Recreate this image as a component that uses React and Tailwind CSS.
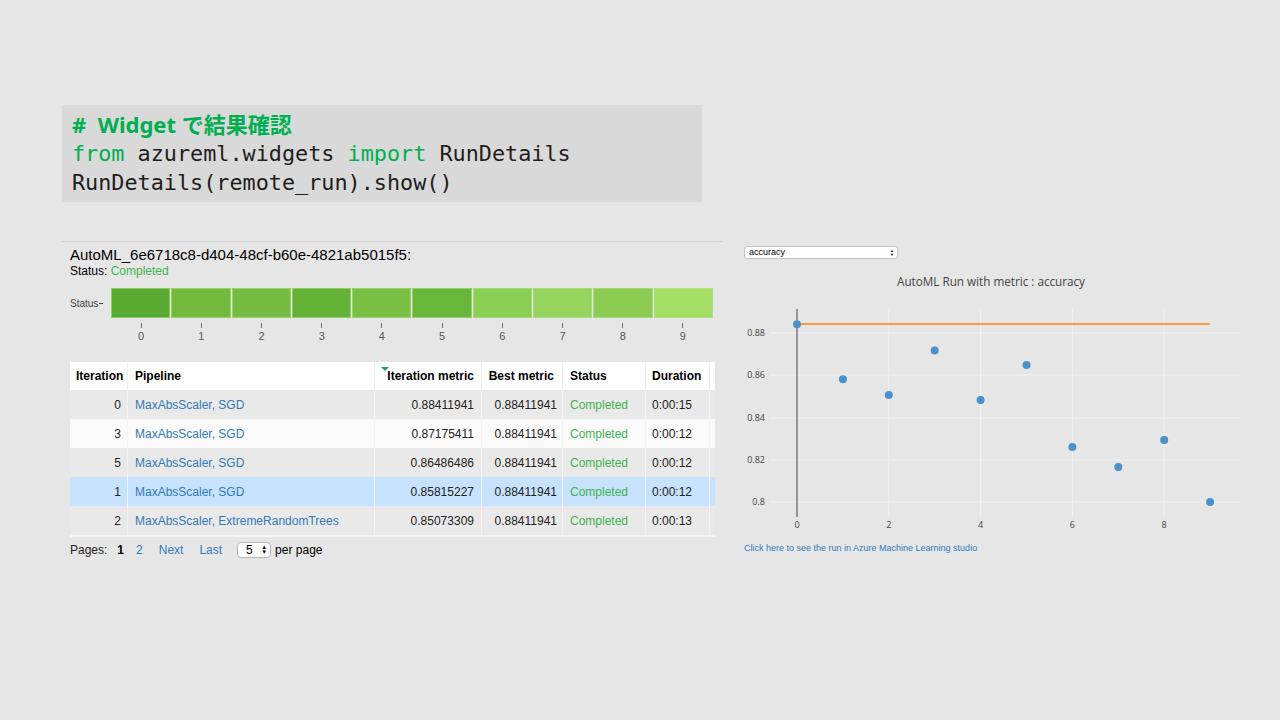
import React from 'react';

const cells = ['#58aa30', '#72ba3e', '#75bd42', '#63b236', '#78bf44', '#68b63a', '#8ccf55', '#97d45d', '#8ccc52', '#a6df66'];

const rows = [
  { it: 0, pipe: 'MaxAbsScaler, SGD', metric: '0.88411941', dur: '0:00:15', bg: 'bg-[#e9e9e9]' },
  { it: 3, pipe: 'MaxAbsScaler, SGD', metric: '0.87175411', dur: '0:00:12', bg: 'bg-[#fafafa]' },
  { it: 5, pipe: 'MaxAbsScaler, SGD', metric: '0.86486486', dur: '0:00:12', bg: 'bg-[#e9e9e9]' },
  { it: 1, pipe: 'MaxAbsScaler, SGD', metric: '0.85815227', dur: '0:00:12', bg: 'bg-[#c6e2fc]' },
  { it: 2, pipe: 'MaxAbsScaler, ExtremeRandomTrees', metric: '0.85073309', dur: '0:00:13', bg: 'bg-[#e9e9e9]' },
];

// accuracy per iteration
const points = [0.88411941, 0.85815227, 0.85073309, 0.87175411, 0.8483, 0.86486486, 0.8261, 0.8166, 0.8294, 0.8001];
const px = (i) => 53 + i * 45.9;
const py = (v) => 43 + ((0.88 - v) / 0.02) * 42.3;

function Chart() {
  const yTicks = [
    { label: '0.88', y: 43 },
    { label: '0.86', y: 85 },
    { label: '0.84', y: 128 },
    { label: '0.82', y: 170 },
    { label: '0.8', y: 212 },
  ];
  const xTicks = [0, 2, 4, 6, 8];
  return (
    <svg width="500" height="245" className="block">
      {yTicks.map((t) => (
        <line key={t.label} x1="26" x2="496" y1={t.y} y2={t.y} stroke="#f2f2f2" strokeWidth="1" />
      ))}
      {xTicks.slice(1).map((t) => (
        <line key={t} x1={px(t)} x2={px(t)} y1="19" y2="227" stroke="#f2f2f2" strokeWidth="1" />
      ))}
      <line x1="53" x2="53" y1="19" y2="227" stroke="#444" strokeWidth="1" />
      {yTicks.map((t) => (
        <text key={t.label} x="21" y={t.y + 3} textAnchor="end" fontSize="9" fill="#444" fontFamily="Open Sans, sans-serif">
          {t.label}
        </text>
      ))}
      {xTicks.map((t) => (
        <text key={t} x={px(t)} y="238" textAnchor="middle" fontSize="9" fill="#444" fontFamily="Open Sans, sans-serif">
          {t}
        </text>
      ))}
      <line x1="53" x2="466" y1="34" y2="34" stroke="#ff7f0e" strokeWidth="1.5" />
      {points.map((v, i) => (
        <circle key={i} cx={px(i)} cy={py(v)} r="4" fill="#4b91c9" />
      ))}
    </svg>
  );
}

export default function App() {
  return (
    <div className="w-[1280px] h-[720px] bg-[#e6e6e6] pt-[105px] pl-[62px] overflow-hidden">
      {/* code cell */}
      <div className="w-[640px] h-[97px] bg-[#d9d9d9] pl-[10px] pt-[5px] leading-[29px]">
        <div className="font-['Noto_Sans','Noto_Sans_CJK_JP',sans-serif] font-bold text-[22px] text-[#00b050]">
          #&nbsp;&nbsp;Widget で結果確認
        </div>
        <div className="font-['DejaVu_Sans_Mono',monospace] text-[21.8px] text-[#1e1e1e]">
          <span className="text-[#00b050]">from</span> azureml.widgets <span className="text-[#00b050]">import</span> RunDetails
        </div>
        <div className="font-['DejaVu_Sans_Mono',monospace] text-[21.8px] text-[#1e1e1e]">
          RunDetails(remote_run).show()
        </div>
      </div>

      {/* widget output */}
      <div className="flex mt-[39px] font-['Liberation_Sans',Arial,sans-serif]">
        <div className="w-[661px] border-t border-[#d2d2d2] pl-[8px]">
          <div className="pt-[4px] text-[15px] leading-[18px] text-black">AutoML_6e6718c8-d404-48cf-b60e-4821ab5015f5:</div>
          <div className="text-[12px] leading-[15px] text-black">
            Status: <span className="text-[#3fb34f]">Completed</span>
          </div>

          <div className="flex items-center mt-[9px] h-[30px]">
            <div className="w-[41px] flex items-center text-[10px] text-[#444]">
              Status<span className="ml-[1px] w-[4px] h-px bg-[#444]"></span>
            </div>
            <div className="flex-1 flex gap-[1px] h-[30px] mr-[10px]">
              {cells.map((c, i) => (
                <div key={i} className="flex-1 border border-[#b3df88]/60" style={{ backgroundColor: c }}></div>
              ))}
            </div>
          </div>
          <div className="flex ml-[41px] mr-[10px] mt-[5px]">
            {cells.map((c, i) => (
              <div key={i} className="flex-1 flex flex-col items-center">
                <div className="w-px h-[5px] bg-[#777]"></div>
                <div className="text-[11px] leading-[14px] mt-[1px] text-[#555]">{i}</div>
              </div>
            ))}
          </div>

          {/* runs table */}
          <div className="mt-[19px] w-[645px] text-[12px] text-[#222] border-b-2 border-[#f4f4f4]">
            <div className="flex h-[28px] bg-white font-bold text-black items-stretch">
              <div className="w-[58px] pl-[6px] flex items-center border-r border-[#efefef]">Iteration</div>
              <div className="w-[247px] pl-[7px] flex items-center border-r border-[#efefef]">Pipeline</div>
              <div className="w-[107px] pr-[7px] flex items-center justify-end border-r border-[#efefef] relative">
                <span className="absolute left-[6px] top-[5px] w-0 h-0 border-l-[4px] border-r-[4px] border-t-[4px] border-l-transparent border-r-transparent border-t-[#1a9e6a]"></span>
                Iteration metric
              </div>
              <div className="w-[81px] pr-[8px] flex items-center justify-end border-r border-[#efefef]">Best metric</div>
              <div className="w-[83px] pl-[7px] flex items-center border-r border-[#efefef]">Status</div>
              <div className="w-[64px] pl-[6px] flex items-center border-r border-[#efefef]">Duration</div>
              <div className="w-[5px]"></div>
            </div>
            {rows.map((r) => (
              <div key={r.it} className={`flex h-[29px] items-stretch ${r.bg}`}>
                <div className="w-[58px] pr-[6px] flex items-center justify-end border-r border-[#f3f3f3]">{r.it}</div>
                <div className="w-[247px] pl-[7px] flex items-center text-[#337ab7] border-r border-[#f3f3f3]">{r.pipe}</div>
                <div className="w-[107px] pr-[7px] flex items-center justify-end border-r border-[#f3f3f3]">{r.metric}</div>
                <div className="w-[81px] pr-[5px] flex items-center justify-end border-r border-[#f3f3f3]">0.88411941</div>
                <div className="w-[83px] pl-[7px] flex items-center text-[#3fb34f] border-r border-[#f3f3f3]">Completed</div>
                <div className="w-[64px] pl-[6px] flex items-center border-r border-[#f3f3f3]">{r.dur}</div>
                <div className="w-[5px]"></div>
              </div>
            ))}
          </div>

          <div className="flex items-center h-[16px] mt-[5px] text-[12px] text-[#222]">
            <span>Pages:</span>
            <span className="ml-[10px] font-bold text-black">1</span>
            <span className="ml-[12px] text-[#337ab7]">2</span>
            <span className="ml-[16px] text-[#337ab7]">Next</span>
            <span className="ml-[16px] text-[#337ab7]">Last</span>
            <span className="ml-[15px] w-[34px] h-[16px] bg-white border border-[#b5b5b5] rounded-[4px] flex items-center justify-between pl-[8px] pr-[3px] text-black">
              5
              <span className="flex flex-col text-[6px] leading-[5px]">
                <span>▲</span>
                <span>▼</span>
              </span>
            </span>
            <span className="ml-[4px] text-black">per page</span>
          </div>
        </div>

        {/* metric chart */}
        <div className="ml-[21px] w-[500px]">
          <div className="mt-[5px] w-[154px] h-[13px] bg-white border border-[#c4c4c4] rounded-[3px] flex items-center justify-between pl-[4px] pr-[3px] text-[9px] text-black">
            accuracy
            <span className="flex flex-col text-[4px] leading-[4px]">
              <span>▲</span>
              <span>▼</span>
            </span>
          </div>
          <div className="mt-[15px] text-center pr-[6px] text-[11.7px] leading-[14px] text-[#444] font-['Open_Sans',sans-serif]">
            AutoML Run with metric : accuracy
          </div>
          <div className="mt-[2px]">
            <Chart />
          </div>
          <div className="mt-[7px] text-[9px] leading-[12px] text-[#337ab7]">
            Click here to see the run in Azure Machine Learning studio
          </div>
        </div>
      </div>
    </div>
  );
}
